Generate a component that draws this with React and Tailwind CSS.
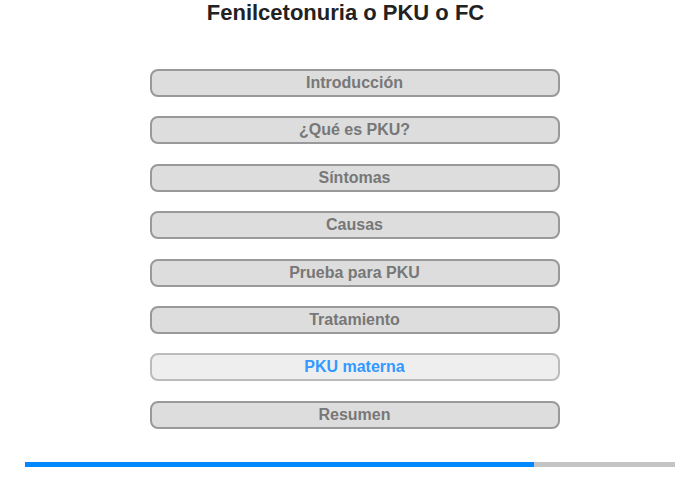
const items = [
  "Introducción",
  "¿Qué es PKU?",
  "Síntomas",
  "Causas",
  "Prueba para PKU",
  "Tratamiento",
  "PKU materna",
  "Resumen",
];

export default function App() {
  return (
    <div className="w-[700px] h-[480px] bg-white font-['Liberation_Sans',Arial,sans-serif] flex flex-col items-center">
      <h1 className="mt-[1px] mr-[9px] text-[22px] leading-[24px] font-bold text-[#222]">
        Fenilcetonuria o PKU o FC
      </h1>
      <div className="mt-[44px] flex flex-col gap-[19.4px] w-[410px] ml-[9px]">
        {items.map((t) => {
          const active = t === "PKU materna";
          return (
            <div
              key={t}
              className={
                active
                  ? "h-[28px] rounded-[8px] border-2 border-[#bbb] bg-[#eee] flex items-center justify-center text-[16px] font-bold text-[#3399ff]"
                  : "h-[28px] rounded-[8px] border-2 border-[#999] bg-[#ddd] flex items-center justify-center text-[16px] font-bold text-[#777]"
              }
            >
              {t}
            </div>
          );
        })}
      </div>
      <div className="mt-[33px] w-[650px] h-[5px] bg-[#c4c4c4] flex">
        <div className="h-full w-[509px] bg-[#0088ff]" />
      </div>
    </div>
  );
}
